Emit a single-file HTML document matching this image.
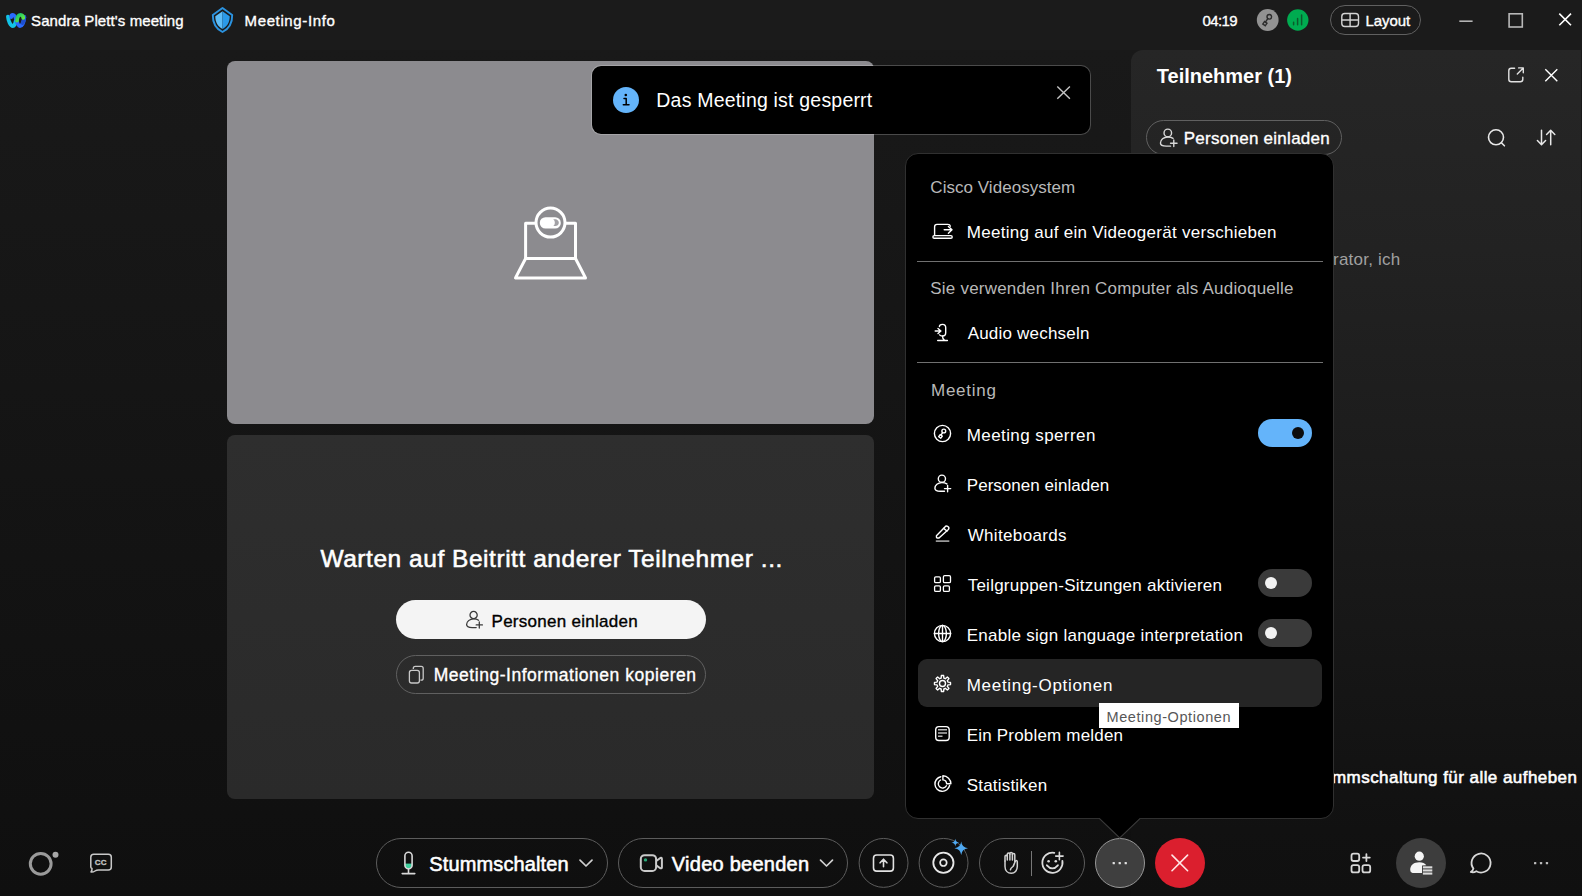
<!DOCTYPE html>
<html lang="de">
<head>
<meta charset="utf-8">
<title>Sandra Plett's meeting</title>
<style>
*{box-sizing:border-box;margin:0;padding:0}
html,body{width:1582px;height:896px;overflow:hidden}
body{position:relative;font-family:"Liberation Sans",sans-serif;color:#fff;
 background:linear-gradient(180deg,#1b1b1b 0px,#1b1b1b 50px,#191919 50px,#0f0f0f 896px);}
.abs{position:absolute}
.t{position:absolute;white-space:nowrap;line-height:normal;z-index:20}
.w-n{font-weight:400}
.w-m{font-weight:400;-webkit-text-stroke:0.35px currentColor}
.w-s{font-weight:400;-webkit-text-stroke:0.55px currentColor}
.w-b{font-weight:700}
svg{position:absolute;overflow:visible}
.tile1{left:227px;top:61px;width:647px;height:363px;border-radius:8px;background:#8c8b8f}
.tile2{left:227px;top:435px;width:647px;height:364px;border-radius:8px;background:linear-gradient(180deg,#2e2e2e,#2a2a2a)}
.toast{left:591px;top:65px;width:500px;height:70px;border-radius:10px;background:#000;background-clip:padding-box;border:1px solid rgba(255,255,255,0.22);z-index:10}
.panel{left:1131px;top:50px;width:450px;height:846px;border-top-left-radius:12px;
 background:linear-gradient(180deg,#262626 0px,#222222 200px,#111111 780px,#101010 846px)}
.menu{left:905px;top:153px;width:429px;height:666px;border-radius:13px;background:#000;border:1px solid #303030;z-index:12}
.div{height:1px;background:#707070;left:917px;width:406px;z-index:13}
.hover{left:918px;top:659px;width:404px;height:48px;border-radius:9px;background:#252525;z-index:13}
.tip{left:1099px;top:703px;width:140px;height:25px;background:#fff;z-index:25}
.pill{border:1px solid #606060;border-radius:100px}
.tog{width:54px;height:28px;border-radius:14px;z-index:14}
.knob{width:12px;height:12px;border-radius:6px;z-index:15}
.circ{border-radius:50%}
</style>
</head>
<body>
<!-- tiles -->
<div class="abs tile1"></div>
<div class="abs tile2"></div>
<div class="abs panel"></div>
<!-- toast -->
<div class="abs toast"></div>
<div class="abs circ" style="left:613px;top:87px;width:26px;height:26px;background:#64b4fa;z-index:11"></div>
<!-- panel pill -->
<div class="abs pill" style="left:1146px;top:120px;width:196px;height:35px"></div>
<!-- layout pill -->
<div class="abs pill" style="left:1330px;top:5px;width:91px;height:30px"></div>
<!-- center buttons -->
<div class="abs" style="left:396px;top:600px;width:310px;height:39px;border-radius:20px;background:#f4f4f4"></div>
<div class="abs pill" style="left:396px;top:655px;width:310px;height:39px"></div>
<!-- menu -->
<div class="abs menu"></div>
<div class="abs div" style="top:261px"></div>
<div class="abs div" style="top:362px"></div>
<div class="abs hover"></div>
<div class="abs tip"></div>
<div class="abs tog" style="left:1258px;top:419px;background:#64b4fa"></div>
<div class="abs knob" style="left:1292px;top:427px;background:#0d0d0d"></div>
<div class="abs tog" style="left:1258px;top:569px;background:#3a3a3a"></div>
<div class="abs knob" style="left:1265px;top:577px;background:#f2f2f2"></div>
<div class="abs tog" style="left:1258px;top:619px;background:#3a3a3a"></div>
<div class="abs knob" style="left:1265px;top:627px;background:#f2f2f2"></div>
<!-- toolbar -->
<div class="abs pill" style="left:376px;top:838px;width:232px;height:50px;border-color:#5c5c5c"></div>
<div class="abs pill" style="left:618px;top:838px;width:230px;height:50px;border-color:#5c5c5c"></div>
<div class="abs pill" style="left:978.5px;top:838px;width:106px;height:50px;border-color:#5c5c5c"></div>
<div class="abs pill" style="left:1095px;top:838px;width:50px;height:50px;border-color:#969696;background:#3f3f3f;z-index:16"></div>
<div class="abs circ" style="left:1155px;top:838px;width:50px;height:50px;background:#db1f2e"></div>
<div class="abs circ" style="left:1396px;top:838px;width:50px;height:50px;background:#3d3d3d"></div>
<svg class="abs" style="left:0;top:0;z-index:5" width="1582" height="896" viewBox="0 0 1582 896" fill="none">
<defs><linearGradient id="wg" x1="0" y1="0" x2="1" y2="1"><stop offset="0" stop-color="#19c46a"/><stop offset="1" stop-color="#6cf03c"/></linearGradient></defs>
<g stroke-linecap="round" stroke-width="3.9" fill="none">
<path d="M8,16.6 C8.4,21 10.4,26 12.9,26 C14.4,26 15.3,23.5 15.7,21" stroke="#12c3e6"/>
<path d="M11.2,17 C11.2,15.6 11.9,14.9 12.9,14.9 C16.6,14.9 16.4,26 20,26 C22.4,26 23.9,21 24.3,17" stroke="#2a6bff"/>
<path d="M22.6,23 C23.5,21.2 24.1,19 24.3,17" stroke="#1d4fd0"/>
<path d="M16.9,20.5 C17.3,17 18.6,14.9 20.6,14.9 C22.2,14.9 23.2,16.2 23.2,17.8" stroke="url(#wg)"/>
</g>
<path d="M222.5,7.9 L232.2,14.9 C232.4,23 229,28.6 222.5,32 C216,28.6 212.6,23 212.8,14.9 Z" stroke="#2b93e0" stroke-width="1.9" stroke-linejoin="round"/>
<path d="M222.5,11.3 L215.3,16.3 C215.3,22.3 217.8,26.5 222.5,29.1 Z" fill="#5ebdf7"/>
<path d="M222.5,11.3 L229.7,16.3 C229.7,22.3 227.2,26.5 222.5,29.1 Z" fill="#2b9ae9"/>
<circle cx="1267.7" cy="20" r="10.9" fill="#929292"/>
<g stroke="#2c2c2c" stroke-width="1.4" fill="none" stroke-linecap="round"><circle cx="1269.3" cy="16.8" r="2.3"/><path d="M1267.8,18.6 L1265.4,22.2"/><rect x="1263.4" y="22.1" width="3" height="3" transform="rotate(35 1264.9 23.6)"/></g>
<circle cx="1297.8" cy="20" r="10.7" fill="#00ab50"/>
<g stroke="#0b5a2c" stroke-width="1.5" stroke-linecap="round"><path d="M1293.6,22.2 V24.8 M1297.6,18.6 V24.8 M1301.6,15 V24.8"/></g>
<g stroke="#d4d4d4" stroke-width="1.4"><rect x="1341.8" y="13.5" width="16.7" height="13" rx="3"/><path d="M1350.1,13.5 V26.5 M1341.8,20 H1358.5"/></g>
<path d="M1459.3,21.2 H1472.6" stroke="#b4b4b4" stroke-width="1.6"/>
<rect x="1509.1" y="13.8" width="13.2" height="13.2" stroke="#b8b8b8" stroke-width="1.6"/>
<path d="M1559.3,13.6 L1571,25.3 M1571,13.6 L1559.3,25.3" stroke="#ffffff" stroke-width="1.6"/>
<g stroke="#ffffff" stroke-width="3" stroke-linejoin="round" stroke-linecap="round">
<path d="M535.5,223.2 H525.6 V258.5 H575.5 V223.2 H565.5"/>
<path d="M525.6,258.5 L515.5,277.9 H585.5 L575.5,258.5"/>
<circle cx="550.5" cy="222.6" r="14.5"/>
</g>
<rect x="539.8" y="217.2" width="21" height="11.4" rx="5.7" fill="#ffffff"/>
<path d="M553.2,219.4 C555.4,220.2 555.4,225.2 553.2,226 C557.5,226.6 558.8,224.4 558.8,222.7 C558.8,221 557.5,218.8 553.2,219.4 Z" fill="#a3a2a6"/>
<g stroke="#e2e2e2" stroke-width="1.4" stroke-linecap="round" stroke-linejoin="round">
<path d="M1514.6,68.3 H1511.3 Q1508.8,68.3 1508.8,70.8 V79.3 Q1508.8,81.8 1511.3,81.8 H1520.3 Q1522.8,81.8 1522.8,79.3 V77.3"/>
<path d="M1517.3,74 L1523,68.3 M1518.6,67.9 H1523.3 V72.8"/>
</g>
<path d="M1545.3,69.3 L1557.3,81.3 M1557.3,69.3 L1545.3,81.3" stroke="#ffffff" stroke-width="1.4"/>
<g stroke="#e8e8e8" stroke-width="1.6" stroke-linecap="round"><circle cx="1496" cy="137.3" r="7.5"/><path d="M1501.6,143 L1504.4,145.8"/></g>
<g stroke="#e8e8e8" stroke-width="1.5" stroke-linecap="round" stroke-linejoin="round"><path d="M1541.5,130.2 V144.6 M1537.4,140.6 L1541.5,144.8 L1545.6,140.6"/><path d="M1550.7,144.8 V130.4 M1546.6,134.4 L1550.7,130.2 L1554.8,134.4"/></g>
<g transform="translate(1167.8,132.9) scale(1.05)" fill="none" stroke="#d8d8d8" stroke-width="1.33" stroke-linecap="round" stroke-linejoin="round"><circle cx="0" cy="0" r="3.6"/><path d="M5,5.2 C3.6,4.3 1.9,3.9 0,3.9 C-4,3.9 -7,6.6 -7,9.6 C-7,11.7 -4.6,12.6 -1.5,12.6 L2.6,12.6"/><path d="M5.7,6.8 V13 M2.6,9.9 H8.8"/></g>
<g transform="translate(473.6,615) scale(1.0)" fill="none" stroke="#3a3a3a" stroke-width="1.30" stroke-linecap="round" stroke-linejoin="round"><circle cx="0" cy="0" r="3.6"/><path d="M5,5.2 C3.6,4.3 1.9,3.9 0,3.9 C-4,3.9 -7,6.6 -7,9.6 C-7,11.7 -4.6,12.6 -1.5,12.6 L2.6,12.6"/><path d="M5.7,6.8 V13 M2.6,9.9 H8.8"/></g>
<g stroke="#c8c8c8" stroke-width="1.3" stroke-linejoin="round"><path d="M413.3,669 V668.4 Q413.3,666.4 415.3,666.4 H421.2 Q423.2,666.4 423.2,668.4 V678.2 Q423.2,680.2 421.2,680.2 H420.4"/><rect x="409.4" y="670.3" width="10" height="12.7" rx="2.2"/></g>
<circle cx="40.7" cy="863.8" r="10.4" stroke="#9a9a9a" stroke-width="3"/><circle cx="55.5" cy="854.7" r="3" fill="#a8a8a8"/>
<path d="M93.8,854.2 H108.3 Q111.3,854.2 111.3,857.2 V866.9 Q111.3,869.9 108.3,869.9 H98.5 Q96.5,869.9 95,871 Q93,872.4 91,872 Q92.2,870.5 92,868.5 Q90.8,868 90.8,866.9 V857.2 Q90.8,854.2 93.8,854.2 Z" stroke="#c8c8c8" stroke-width="1.5" stroke-linejoin="round"/>
<clipPath id="micc"><rect x="404.9" y="852.2" width="7.2" height="16.6" rx="3.6"/></clipPath>
<rect x="404" y="863.6" width="9" height="5.5" fill="#3fcf9d" clip-path="url(#micc)"/>
<g stroke="#d8d8d8" stroke-width="1.6" stroke-linecap="round"><rect x="404.9" y="852.2" width="7.2" height="16.6" rx="3.6"/><path d="M408.5,869 V873.4 M402.2,873.6 H414.8"/></g>
<g stroke="#cfcfcf" stroke-width="1.7" stroke-linecap="round" stroke-linejoin="round"><path d="M580,860.2 L586,866 L592,860.2"/><path d="M820.5,860.2 L826.5,866 L832.5,860.2"/></g>
<g stroke="#cacaca" stroke-width="2" stroke-linejoin="round"><rect x="640.8" y="855.2" width="15.3" height="15.8" rx="3.8"/><path d="M656.6,860.8 L660.3,858 Q661.9,857.4 661.9,859 V867.2 Q661.9,868.8 660.3,868.2 L656.6,865.6"/></g>
<circle cx="645.5" cy="859.9" r="1.7" fill="#27a878"/>
<circle cx="883.55" cy="862.9" r="24.45" stroke="#5c5c5c" stroke-width="1"/><circle cx="943.55" cy="862.9" r="24.45" stroke="#5c5c5c" stroke-width="1"/>
<g stroke="#e2e2e2" stroke-width="1.6" stroke-linecap="round" stroke-linejoin="round"><rect x="873.5" y="855" width="19.9" height="16.1" rx="3.2"/><path d="M883.5,866.8 V859.2 M880.1,862.8 L883.5,859.2 L886.9,862.8"/></g>
<g stroke="#e8e8e8"><circle cx="943.4" cy="862.7" r="10.1" stroke-width="1.8"/><circle cx="943.4" cy="862.7" r="3.3" stroke-width="1.7"/></g>
<path d="M961.2,841.5Q961.88,847.62 968.00,848.30Q961.88,848.98 961.20,855.10Q960.52,848.98 954.40,848.30Q960.52,847.62 961.20,841.50Z" fill="#4fa8f0"/>
<path d="M955.3,838.8000000000001Q955.68,842.22 959.10,842.60Q955.68,842.98 955.30,846.40Q954.92,842.98 951.50,842.60Q954.92,842.22 955.30,838.80Z" fill="#4fa8f0"/>
<g stroke="#d2d2d2" stroke-width="1.5" stroke-linecap="round" stroke-linejoin="round">
<path d="M1005,861 V856.5 Q1005,855.3 1006.2,855.3 Q1007.3,855.3 1007.3,856.5 V854.3 Q1007.3,853 1008.6,853 Q1009.9,853 1009.9,854.3 V853.6 Q1009.9,852.4 1011.1,852.4 Q1012.4,852.4 1012.4,853.6 V854.6 Q1012.4,853.6 1013.6,853.6 Q1014.8,853.6 1014.8,854.8 V861.5"/>
<path d="M1007.3,856.5 V860 M1009.9,854.3 V860 M1012.4,854.6 V860"/>
<path d="M1005,861 V866.5 C1005,871 1008,873.3 1011.3,873.3 C1014.6,873.3 1017.3,870.5 1017.3,866.5 V862 Q1017.3,860.2 1015.8,860.6 C1014.5,862.5 1013.8,865.5 1013,866.5 C1012,867.3 1010.6,868.2 1010.4,869.8"/>
</g>
<path d="M1031.5,851 V876" stroke="#777777" stroke-width="1"/>
<g stroke="#dcdcdc" stroke-width="1.8" stroke-linecap="round">
<path d="M1054.3,852.8 A10.1,10.1 0 1 0 1062.4,861"/>
<path d="M1046.9,865.3 Q1052.4,871.6 1057.9,865.3"/>
<path d="M1059.4,852.4 V859.8 M1055.7,856.1 H1063.1" stroke-width="1.6"/>
</g>
<circle cx="1048.6" cy="861.2" r="1.3" fill="#dcdcdc"/><circle cx="1055.8" cy="861.2" r="1.3" fill="#dcdcdc"/>
<path d="M1172,855.1 L1187.6,870.7 M1187.6,855.1 L1172,870.7" stroke="#ffe6e6" stroke-width="1.6" stroke-linecap="round"/>
<g stroke="#d8d8d8" stroke-width="1.8" stroke-linejoin="round" stroke-linecap="round"><rect x="1351.5" y="853.7" width="7.7" height="7.3" rx="2"/><rect x="1351.5" y="865.1" width="7.7" height="7.3" rx="2"/><rect x="1362.5" y="865.1" width="7.7" height="7.3" rx="2"/><path d="M1366.4,854.2 V861 M1363,857.6 H1369.8"/></g>
<circle cx="1419.3" cy="856.2" r="4.6" fill="#f5f5f5"/>
<path d="M1410.2,870 C1410.2,865 1414,862.3 1419.3,862.3 C1422.6,862.3 1425,863.3 1426.3,865.2 L1422,865.4 V873 H1412.5 Q1410.2,872.4 1410.2,870 Z" fill="#f5f5f5"/>
<g fill="#dcdcdc"><rect x="1422.9" y="866.3" width="9.4" height="2.1"/><rect x="1422.9" y="869.4" width="9.4" height="2.1"/><rect x="1422.9" y="872.5" width="9.4" height="2.1"/></g>
<path d="M1473.4,868.6 A9.5,9.5 0 1 1 1476.3,871.2 Q1473.5,873 1470.8,872 Q1473,870.6 1473.4,868.6 Z" stroke="#d8d8d8" stroke-width="1.8" stroke-linejoin="round"/>
<g fill="#bdbdbd"><rect x="1534" y="862" width="2.3" height="2.3" rx="0.6"/><rect x="1539.9" y="862" width="2.3" height="2.3" rx="0.6"/><rect x="1545.8" y="862" width="2.3" height="2.3" rx="0.6"/></g>
</svg>
<svg class="abs" style="left:0;top:0;z-index:18" width="1582" height="896" viewBox="0 0 1582 896" fill="none">
<circle cx="625.8" cy="95" r="1.3" fill="#000"/><path d="M624,98.6 H626.2 V104.6 M623.3,104.8 H629" stroke="#000" stroke-width="1.5" stroke-linecap="round" stroke-linejoin="round"/>
<path d="M1057.3,86.4 L1069.9,98.8 M1069.9,86.4 L1057.3,98.8" stroke="#c4c4c4" stroke-width="1.4"/>
<path d="M1098.6,817.6 H1140.9 L1119.75,838.2 Z" fill="#000"/><path d="M1099.3,818.4 L1119.75,837.9 L1140.2,818.4" stroke="#3a3a3a" stroke-width="1.1"/>
<g fill="#e0e0e0"><rect x="1112.6" y="862" width="2.3" height="2.3" rx="0.6"/><rect x="1118.6" y="862" width="2.3" height="2.3" rx="0.6"/><rect x="1124.6" y="862" width="2.3" height="2.3" rx="0.6"/></g>
<g stroke="#ffffff" stroke-width="1.4" stroke-linecap="round" stroke-linejoin="round">
<path d="M950.3,226.2 Q950,224.4 947.8,224.4 H937 Q934.6,224.4 934.6,226.8 V235.4"/><rect x="932.9" y="235.6" width="19.3" height="2.6" rx="1.3"/><path d="M944.2,229.8 H951.8 M948.4,226.4 L952,229.8 L948.4,233.3"/>
<path d="M939.4,326.6 C939.4,325.2 940.8,324.4 942.5,324.4 C944.4,324.4 945.7,325.8 945.7,327.6 V332.8 C945.7,334.6 944.4,336 942.5,336 C941.2,336 940.2,335.6 939.6,334.9"/><path d="M942.5,336.2 C942.5,338.4 943.3,339.6 944.6,340.4 M937.7,340.5 H947.4"/><path d="M935.2,331 H940.6 M938,328.5 L940.9,331 L938,333.6"/>
<circle cx="942.5" cy="433.5" r="8.1"/><circle cx="943.8" cy="431" r="1.9"/><path d="M942.6,432.7 L941,435.2"/><rect x="939.2" y="435.1" width="2.6" height="2.6" transform="rotate(35 940.5 436.4)"/>
<path d="M936.45,535.7 L944.9,527 A2.15,2.15 0 0 1 948.4,529.5 L939,538.05 H937.2 Q936.45,538.05 936.45,537.3 Z"/><path d="M943.6,528.4 L947,531"/>
<g stroke-width="1.3"><rect x="934.6" y="576.8" width="5.8" height="5.9" rx="1.2"/><rect x="943.4" y="575.7" width="7.1" height="7" rx="1.3"/><rect x="934.6" y="585.8" width="5.8" height="5.6" rx="1.2"/><rect x="943.4" y="585.8" width="6" height="5.6" rx="1.2"/></g>
<circle cx="942.5" cy="633.5" r="8.1"/><ellipse cx="942.5" cy="633.5" rx="3.9" ry="8.1"/><path d="M942.5,625.4 V641.6 M934.4,633.5 H950.6"/>
<path d="M941.37,675.53A8.05,8.05 0 0 1 943.63,675.53L943.89,678.08A5.60,5.60 0 0 1 945.35,678.68L947.33,677.06A8.05,8.05 0 0 1 948.94,678.67L947.32,680.65A5.60,5.60 0 0 1 947.92,682.11L950.47,682.37A8.05,8.05 0 0 1 950.47,684.63L947.92,684.89A5.60,5.60 0 0 1 947.32,686.35L948.94,688.33A8.05,8.05 0 0 1 947.33,689.94L945.35,688.32A5.60,5.60 0 0 1 943.89,688.92L943.63,691.47A8.05,8.05 0 0 1 941.37,691.47L941.11,688.92A5.60,5.60 0 0 1 939.65,688.32L937.67,689.94A8.05,8.05 0 0 1 936.06,688.33L937.68,686.35A5.60,5.60 0 0 1 937.08,684.89L934.53,684.63A8.05,8.05 0 0 1 934.53,682.37L937.08,682.11A5.60,5.60 0 0 1 937.68,680.65L936.06,678.67A8.05,8.05 0 0 1 937.67,677.06L939.65,678.68A5.60,5.60 0 0 1 941.11,678.08Z"/><circle cx="942.5" cy="683.5" r="3"/>
<rect x="935.7" y="726.6" width="13.5" height="13.9" rx="3.2"/>
<path d="M940.8,776.7 A7.4,7.4 0 1 0 949.6,785.4"/><path d="M940.6,780 A4.3,4.3 0 1 0 946.4,785.8"/><path d="M942.9,775.8 A8,8 0 0 1 950.9,783.8 H946.6 A4,4 0 0 0 942.9,779.9 Z"/>
</g>
<path d="M938,729.8 H947 M938,733 H947 M938,736.3 H942.5" stroke="#b8b8b8" stroke-width="1.4"/>
<path d="M935.8,541.1 H949.3" stroke="#b4b4b4" stroke-width="1.5"/>
<g transform="translate(941.9,478.7) scale(1.0)" fill="none" stroke="#ffffff" stroke-width="1.40" stroke-linecap="round" stroke-linejoin="round"><circle cx="0" cy="0" r="3.6"/><path d="M5,5.2 C3.6,4.3 1.9,3.9 0,3.9 C-4,3.9 -7,6.6 -7,9.6 C-7,11.7 -4.6,12.6 -1.5,12.6 L2.6,12.6"/><path d="M5.7,6.8 V13 M2.6,9.9 H8.8"/></g>
</svg>
<span class="t w-m" style="left:31.08px;top:12.00px;font-size:15px;letter-spacing:0.099px;color:#ffffff;">Sandra Plett's meeting</span>
<span class="t w-m" style="left:244.55px;top:12.00px;font-size:15px;letter-spacing:0.625px;color:#ffffff;">Meeting-Info</span>
<span class="t w-m" style="left:1202.50px;top:12.00px;font-size:15px;letter-spacing:-0.597px;color:#ffffff;">04:19</span>
<span class="t w-m" style="left:1365.50px;top:12.00px;font-size:15px;letter-spacing:-0.051px;color:#ffffff;">Layout</span>
<span class="t w-n" style="left:656.34px;top:89.00px;font-size:19.5px;letter-spacing:0.198px;color:#ffffff;">Das Meeting ist gesperrt</span>
<span class="t w-b" style="left:1156.82px;top:65.00px;font-size:20px;letter-spacing:-0.005px;color:#ffffff;">Teilnehmer (1)</span>
<span class="t w-m" style="left:1183.71px;top:129.30px;font-size:17px;letter-spacing:0.267px;color:#ffffff;">Personen einladen</span>
<span class="t w-n" style="left:1333.10px;top:250.20px;font-size:17px;letter-spacing:0.204px;color:#a0a0a0;z-index:6;">rator, ich</span>
<span class="t w-s" style="left:1332.00px;top:767.80px;font-size:17px;letter-spacing:0.446px;color:#ffffff;z-index:6;">mmschaltung für alle aufheben</span>
<span class="t w-n" style="left:930.34px;top:178.20px;font-size:17px;letter-spacing:0.038px;color:#b8b8b8;">Cisco Videosystem</span>
<span class="t w-n" style="left:966.76px;top:223.40px;font-size:17px;letter-spacing:0.283px;color:#ffffff;">Meeting auf ein Videogerät verschieben</span>
<span class="t w-n" style="left:930.34px;top:279.30px;font-size:17px;letter-spacing:0.202px;color:#b8b8b8;">Sie verwenden Ihren Computer als Audioquelle</span>
<span class="t w-n" style="left:967.66px;top:324.20px;font-size:17px;letter-spacing:0.201px;color:#ffffff;">Audio wechseln</span>
<span class="t w-n" style="left:930.97px;top:381.30px;font-size:17px;letter-spacing:0.754px;color:#b8b8b8;">Meeting</span>
<span class="t w-n" style="left:966.76px;top:426.00px;font-size:17px;letter-spacing:0.410px;color:#ffffff;">Meeting sperren</span>
<span class="t w-n" style="left:966.76px;top:476.20px;font-size:17px;letter-spacing:0.041px;color:#ffffff;">Personen einladen</span>
<span class="t w-n" style="left:967.66px;top:526.00px;font-size:17px;letter-spacing:0.351px;color:#ffffff;">Whiteboards</span>
<span class="t w-n" style="left:967.66px;top:576.00px;font-size:17px;letter-spacing:0.247px;color:#ffffff;">Teilgruppen-Sitzungen aktivieren</span>
<span class="t w-n" style="left:966.76px;top:626.00px;font-size:17px;letter-spacing:0.257px;color:#ffffff;">Enable sign language interpretation</span>
<span class="t w-n" style="left:966.76px;top:675.80px;font-size:17px;letter-spacing:0.697px;color:#ffffff;">Meeting-Optionen</span>
<span class="t w-n" style="left:966.76px;top:726.00px;font-size:17px;letter-spacing:0.185px;color:#ffffff;">Ein Problem melden</span>
<span class="t w-n" style="left:966.76px;top:775.80px;font-size:17px;letter-spacing:0.194px;color:#ffffff;">Statistiken</span>
<span class="t w-n" style="left:1106.50px;top:709.00px;font-size:14.5px;letter-spacing:0.586px;color:#575757;z-index:30;">Meeting-Optionen</span>
<span class="t w-s" style="left:320.45px;top:545.40px;font-size:24.5px;letter-spacing:0.537px;color:#ffffff;">Warten auf Beitritt anderer Teilnehmer ...</span>
<span class="t w-m" style="left:491.55px;top:611.80px;font-size:17px;letter-spacing:0.267px;color:#000000;">Personen einladen</span>
<span class="t w-m" style="left:433.76px;top:665.20px;font-size:17.5px;letter-spacing:0.522px;color:#ffffff;">Meeting-Informationen kopieren</span>
<span class="t w-s" style="left:429.24px;top:852.50px;font-size:20px;letter-spacing:0.136px;color:#ffffff;">Stummschalten</span>
<span class="t w-s" style="left:671.82px;top:852.50px;font-size:20px;letter-spacing:0.258px;color:#ffffff;">Video beenden</span>
<span class="t w-b" style="left:94.80px;top:858.40px;font-size:8px;letter-spacing:0.138px;color:#c4c4c4;-webkit-text-stroke:0.3px #c4c4c4;">CC</span>
</body>
</html>
